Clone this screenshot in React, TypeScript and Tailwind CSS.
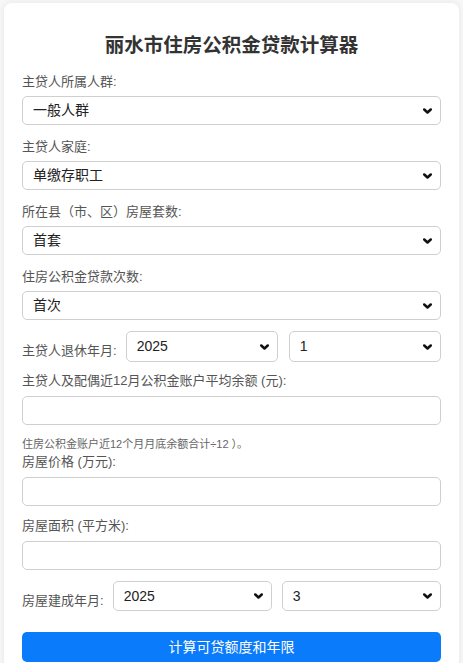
import React from "react";

const font = {
  fontFamily: '"Liberation Sans", Arial, "Noto Sans CJK SC", sans-serif',
};

function Chevron() {
  return (
    <svg
      aria-hidden
      viewBox="0 0 10 6"
      className="pointer-events-none absolute right-[9px] top-1/2 h-[6px] w-[9px] -translate-y-1/2 text-[#111]"
      fill="none"
    >
      <path
        d="M1.4 1.3 L5 4.7 L8.6 1.3"
        stroke="currentColor"
        strokeWidth="2.8"
        strokeLinecap="round"
        strokeLinejoin="round"
      />
    </svg>
  );
}

function Select({ value, h = "h-[29px]", className = "" }: { value: string; h?: string; className?: string }) {
  return (
    <div className={`relative ${className}`}>
      <select
        defaultValue={value}
        className={`block w-full appearance-none rounded-[5px] border border-[#cfcfcf] bg-white pl-[10px] pr-6 text-[14px] text-[#222] outline-none ${h}`}
        style={font}
      >
        <option>{value}</option>
      </select>
      <Chevron />
    </div>
  );
}

function Field({ label, value }: { label: string; value: string }) {
  return (
    <div className="mb-[12px]">
      <div className="mb-[4px] h-[20px] text-[13px] leading-[20px] text-[#555]">{label}</div>
      <Select value={value} />
    </div>
  );
}

function TextInput() {
  return (
    <input
      type="text"
      className="block h-[29px] w-full rounded-[5px] border border-[#cfcfcf] bg-white px-[10px] text-[14px] outline-none"
      style={font}
    />
  );
}

export default function App() {
  return (
    <div className="min-h-[663px] bg-[#f7f7f7] pt-[3px]" style={font}>
      <div className="ml-[4px] w-[455px] rounded-[8px] bg-white px-[18px] pb-[6px] pt-[28px] shadow-[0_0_6px_rgba(0,0,0,0.08)]">
        <h1 className="mb-[13px] text-center text-[19.5px] font-bold leading-[28px] text-[#333]">
          丽水市住房公积金贷款计算器
        </h1>

        <Field label="主贷人所属人群:" value="一般人群" />
        <Field label="主贷人家庭:" value="单缴存职工" />
        <Field label="所在县（市、区）房屋套数:" value="首套" />
        <div className="mb-[11px]">
          <div className="mb-[4px] h-[20px] text-[13px] leading-[20px] text-[#555]">住房公积金贷款次数:</div>
          <Select value="首次" />
        </div>

        <div className="flex items-end gap-[9px]">
          <span className="pb-[1px] text-[13px] leading-[20px] text-[#555]">主贷人退休年月:</span>
          <div className="flex flex-1 gap-[11px]">
            <Select value="2025" h="h-[31px]" className="flex-1" />
            <Select value="1" h="h-[31px]" className="flex-1" />
          </div>
        </div>

        <div className="mt-[9px] mb-[5px] h-[20px] text-[13px] leading-[20px] text-[#555]">
          主贷人及配偶近12月公积金账户平均余额 (元):
        </div>
        <TextInput />
        <div className="mt-[11px] text-[11px] leading-[16px] text-[#666]">
          住房公积金账户近12个月月底余额合计÷12 ）。
        </div>

        <div className="mb-[5px] h-[20px] text-[13px] leading-[20px] text-[#555]">房屋价格 (万元):</div>
        <TextInput />

        <div className="mt-[10px] mb-[5px] h-[20px] text-[13px] leading-[20px] text-[#555]">房屋面积 (平方米):</div>
        <TextInput />

        <div className="mt-[11px] flex items-end gap-[9px]">
          <span className="text-[13px] leading-[20px] text-[#555]">房屋建成年月:</span>
          <div className="flex flex-1 gap-[10px]">
            <Select value="2025" h="h-[30px]" className="flex-1" />
            <Select value="3" h="h-[30px]" className="flex-1" />
          </div>
        </div>

        <button
          type="button"
          className="mt-[21px] block h-[30px] w-full rounded-[5px] bg-[#0a7bfb] text-[14px] text-white"
          style={font}
        >
          计算可贷额度和年限
        </button>
      </div>
    </div>
  );
}
